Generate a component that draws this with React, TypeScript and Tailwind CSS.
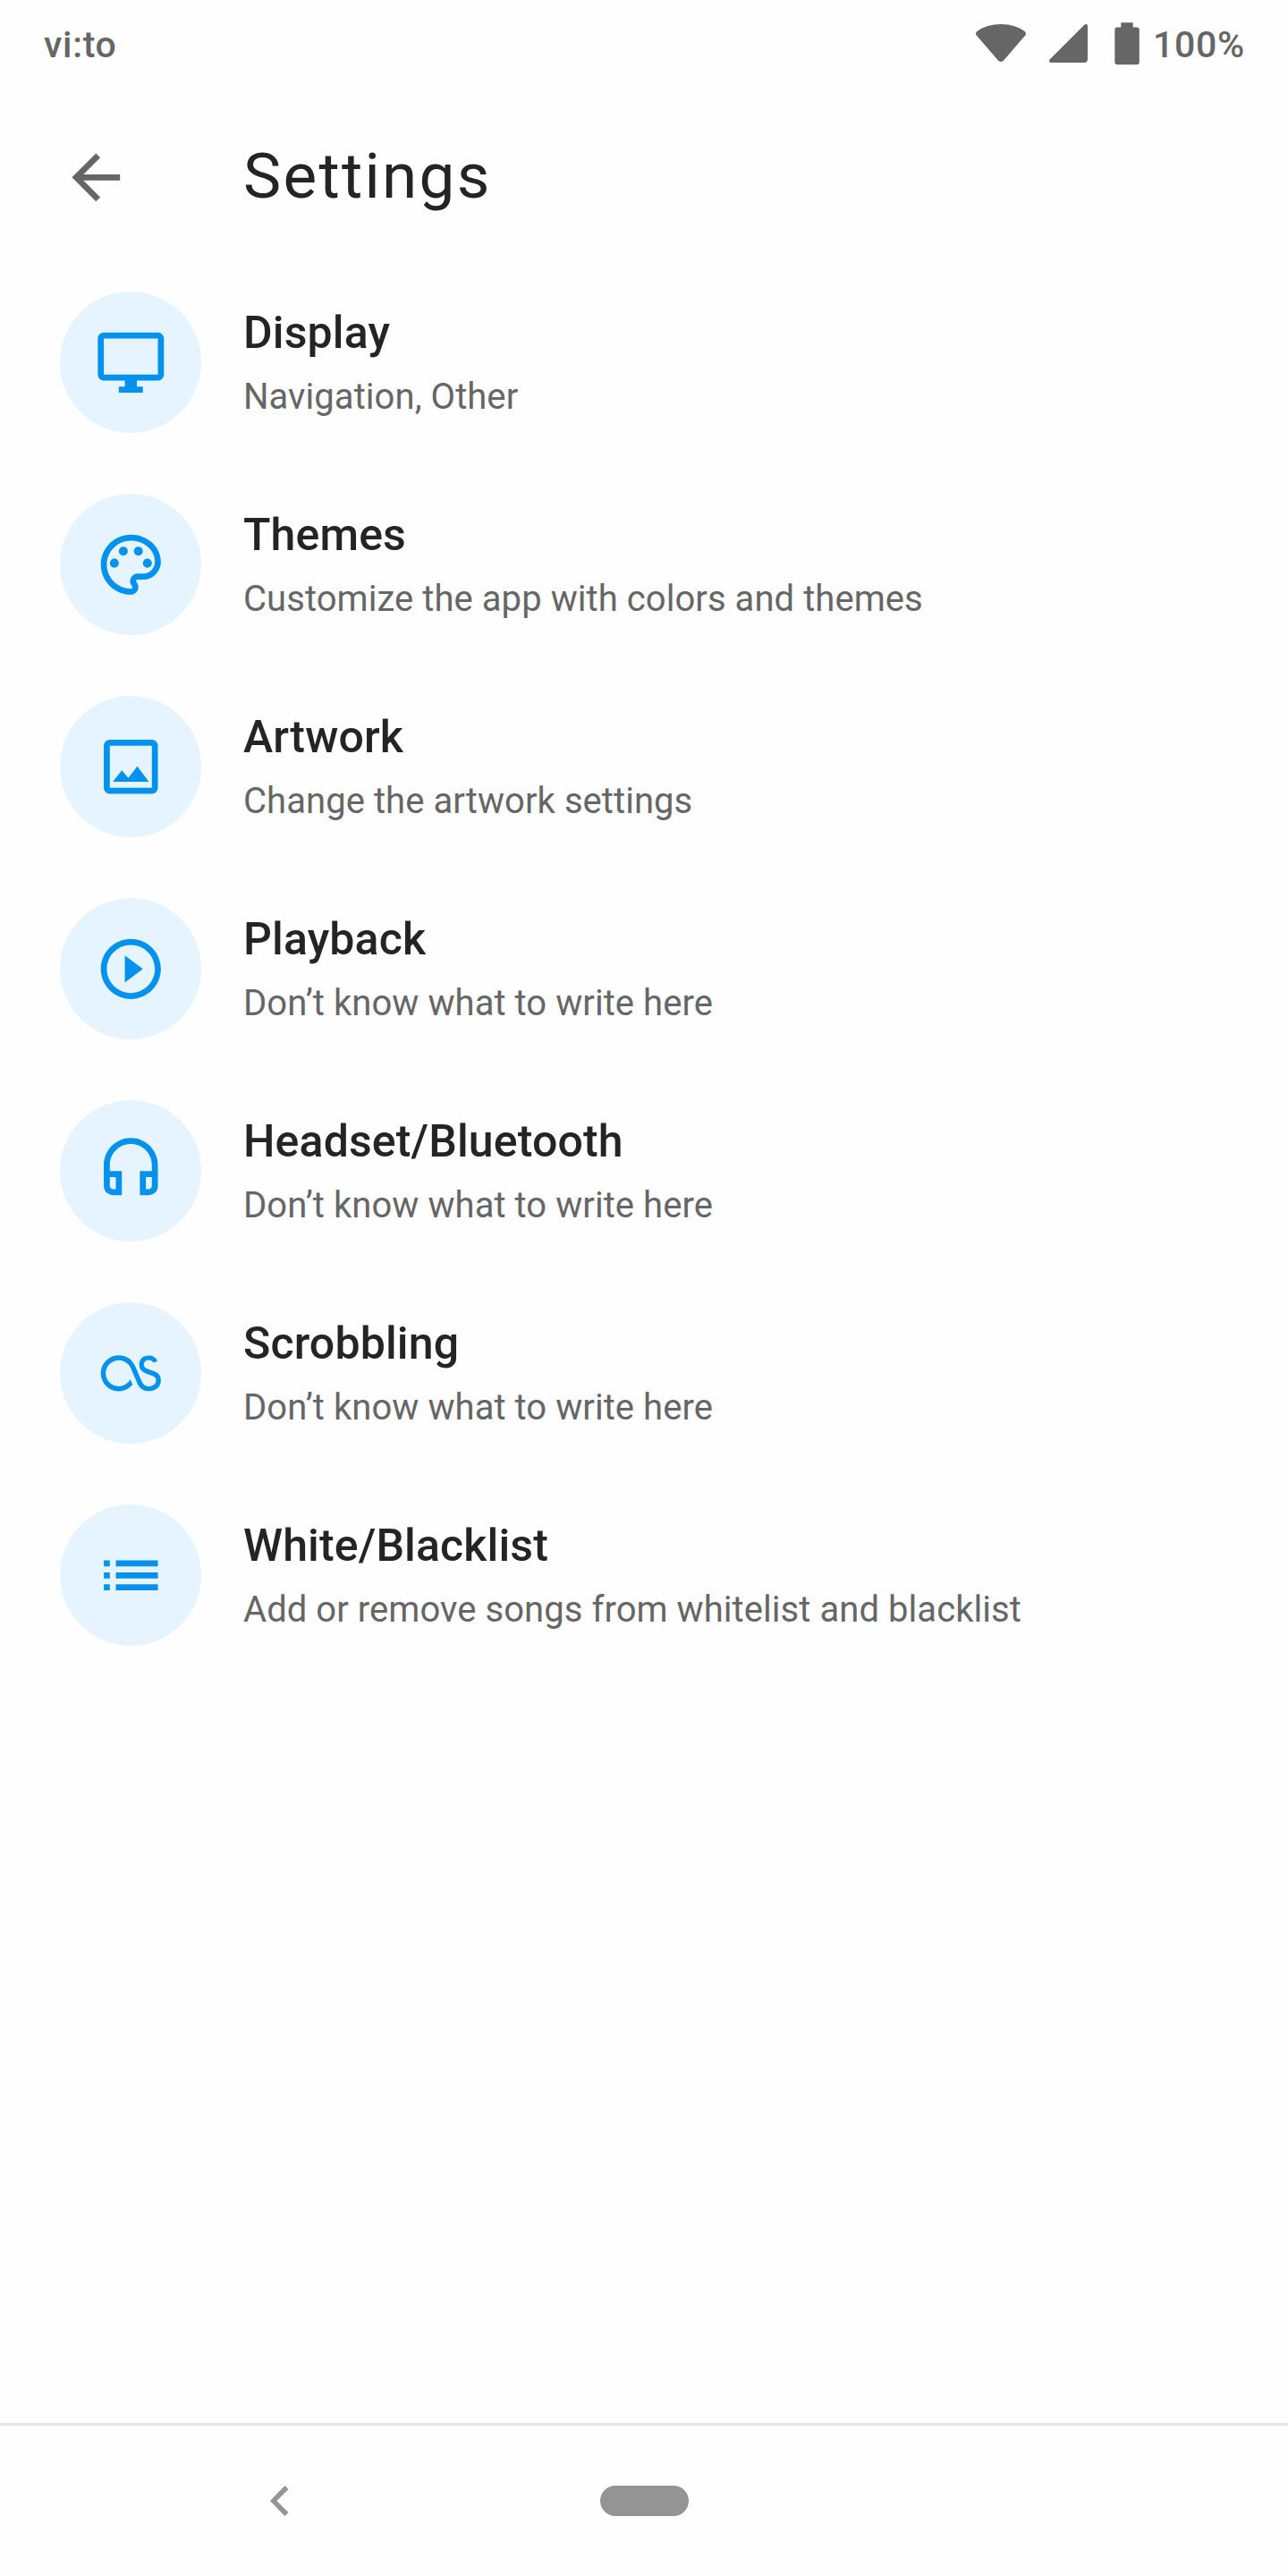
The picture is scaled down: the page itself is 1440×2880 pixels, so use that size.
import React from "react";

const iconPaths = {
  display:
    "M21 2H3c-1.1 0-2 .9-2 2v12c0 1.1.9 2 2 2h7v2H8v2h8v-2h-2v-2h7c1.1 0 2-.9 2-2V4c0-1.1-.9-2-2-2zm0 14H3V4h18v12z",
  themes:
    "M12 22C6.49 22 2 17.51 2 12S6.49 2 12 2s10 4.04 10 9c0 3.31-2.69 6-6 6h-1.77c-.28 0-.5.22-.5.5 0 .12.05.23.13.33.41.47.64 1.06.64 1.67A2.5 2.5 0 0 1 12 22zm0-18c-4.41 0-8 3.59-8 8s3.59 8 8 8c.28 0 .5-.22.5-.5a.54.54 0 0 0-.14-.35c-.41-.46-.63-1.05-.63-1.65a2.5 2.5 0 0 1 2.5-2.5H16c2.21 0 4-1.79 4-4 0-3.86-3.59-7-8-7z M5 11.5a1.5 1.5 0 1 0 3 0a1.5 1.5 0 1 0-3 0z M8 7.5a1.5 1.5 0 1 0 3 0a1.5 1.5 0 1 0-3 0z M13 7.5a1.5 1.5 0 1 0 3 0a1.5 1.5 0 1 0-3 0z M16 11.5a1.5 1.5 0 1 0 3 0a1.5 1.5 0 1 0-3 0z",
  artwork:
    "M19 5v14H5V5h14m0-2H5c-1.1 0-2 .9-2 2v14c0 1.1.9 2 2 2h14c1.1 0 2-.9 2-2V5c0-1.1-.9-2-2-2zm-4.86 8.86l-3 3.87L9 13.14 6 17h12l-3.86-5.14z",
  playback:
    "M10 16.5l6-4.5-6-4.5v9zM12 2C6.48 2 2 6.48 2 12s4.48 10 10 10 10-4.48 10-10S17.52 2 12 2zm0 18c-4.41 0-8-3.59-8-8s3.59-8 8-8 8 3.59 8 8-3.59 8-8 8z",
  headset:
    "M12 1c-4.97 0-9 4.03-9 9v7c0 1.66 1.34 3 3 3h3v-8H5v-2c0-3.87 3.13-7 7-7s7 3.13 7 7v2h-4v8h3c1.66 0 3-1.34 3-3v-7c0-4.97-4.03-9-9-9zM7 14v4H6c-.55 0-1-.45-1-1v-3h2zm12 3c0 .55-.45 1-1 1h-1v-4h2v3z",
  scrobbling:
    "M18,17.93C15.92,17.92 14.81,16.9 14.04,15.09L13.82,14.6L11.92,10.23C11.29,8.69 9.72,7.64 7.96,7.64C5.57,7.64 3.63,9.59 3.63,12C3.63,14.41 5.57,16.36 7.96,16.36C9.62,16.36 11.08,15.41 11.8,14L12.57,15.81C11.5,17.15 9.82,18 7.96,18C4.67,18 2,15.32 2,12C2,8.69 4.67,6 7.96,6C10.44,6 12.45,7.34 13.47,9.7C13.54,9.89 14.54,12.24 15.42,14.24C15.96,15.5 16.42,16.31 17.91,16.36C19.38,16.41 20.39,15.5 20.39,14.37C20.39,13.26 19.62,13 18.32,12.56C16,11.79 14.79,11 14.79,9.15C14.79,7.33 16,6.12 18,6.12C19.31,6.12 20.24,6.7 20.89,7.86L19.62,8.5C19.14,7.84 18.61,7.57 17.94,7.57C17,7.57 16.33,8.23 16.33,9.1C16.33,10.34 17.43,10.53 18.97,11.03C21.04,11.71 22,12.5 22,14.42C22,16.45 20.27,17.93 18,17.93",
  list: "M3 13h2v-2H3v2zm0 4h2v-2H3v2zm0-8h2V7H3v2zm4 4h14v-2H7v2zm0 4h14v-2H7v2zM7 7v2h14V7H7z",
  back: "M20 11H7.83l5.59-5.59L12 4l-8 8 8 8 1.41-1.41L7.83 13H20v-2z",
};

type IconName = keyof typeof iconPaths;

const rows: { icon: IconName; title: string; subtitle: string }[] = [
  { icon: "display", title: "Display", subtitle: "Navigation, Other" },
  { icon: "themes", title: "Themes", subtitle: "Customize the app with colors and themes" },
  { icon: "artwork", title: "Artwork", subtitle: "Change the artwork settings" },
  { icon: "playback", title: "Playback", subtitle: "Don’t know what to write here" },
  { icon: "headset", title: "Headset/Bluetooth", subtitle: "Don’t know what to write here" },
  { icon: "scrobbling", title: "Scrobbling", subtitle: "Don’t know what to write here" },
  { icon: "list", title: "White/Blacklist", subtitle: "Add or remove songs from whitelist and blacklist" },
];

function Icon({ name }: { name: IconName }) {
  return (
    <svg viewBox="0 0 24 24" className="size-[80.6px] shrink-0" fill="currentColor" aria-hidden="true">
      <path d={iconPaths[name]} />
    </svg>
  );
}

function StatusBar() {
  return (
    <div className="flex h-[100px] items-center justify-between pl-[49px] pr-[48px] text-[41px] leading-[48px] font-medium tracking-[0.7px] text-[#666666]">
      <span>vi:to</span>
      <div className="flex items-center">
        <svg viewBox="0 0 56 42" className="mr-[26px] mb-[4px] h-[42px] w-[56px]" fill="currentColor" aria-hidden="true">
          <path d="M1.2 8.2C8.5 2.7 18 0 28 0s19.5 2.7 26.8 8.2c1.4 1.1 1.6 3 .5 4.4L31.4 40.3c-1.8 2.2-5 2.2-6.8 0L.7 12.6c-1.1-1.4-.9-3.3.5-4.4z" />
        </svg>
        <svg viewBox="0 0 43 43" className="mr-[30px] mb-[3px] h-[43px] w-[43px]" fill="currentColor" aria-hidden="true">
          <path d="M43 2v37a4 4 0 0 1-4 4H2C.2 43-.7 40.9.6 39.6L39.6.6C40.9-.7 43 .2 43 2z" />
        </svg>
        <svg viewBox="0 0 28 48" className="mr-[15.4px] mb-[2px] h-[48px] w-[28px]" fill="currentColor" aria-hidden="true">
          <path d="M7.3.3h13.4v5.3h4.1a3 3 0 0 1 3 3v35.7a3 3 0 0 1-3 3H3.3a3 3 0 0 1-3-3V8.6a3 3 0 0 1 3-3h4z" />
        </svg>
        <span>100%</span>
      </div>
    </div>
  );
}

export default function App() {
  return (
    <div className="flex h-[2880px] w-[1440px] flex-col bg-[#fefefe] font-['Roboto',sans-serif]">
      <StatusBar />
      <header className="flex h-[197px] items-center gap-[124px] pl-[67.4px] text-[#666666]">
        <button type="button" aria-label="Back" className="block">
          <Icon name="back" />
        </button>
        <h1 className="pb-[3px] text-[71px] leading-[84px] tracking-[2.3px] text-[#242424]">Settings</h1>
      </header>

      <main className="flex-1 pt-[29px]">
        <ul className="flex flex-col gap-[68px]">
          {rows.map((row) => (
            <li key={row.title} className="flex h-[158px] items-start pl-[67px]">
              <div className="flex size-[158px] shrink-0 items-center justify-center rounded-full bg-[#e5f4fe] text-[#0492ee]">
                <Icon name={row.icon} />
              </div>
              <div className="ml-[47px] pt-[16px]">
                <h2 className="text-[50px] leading-[60px] font-medium tracking-[0.15px] text-[#242424]">{row.title}</h2>
                <p className="mt-[17.5px] text-[40px] leading-[48px] tracking-[0.06px] text-[#666666]">{row.subtitle}</p>
              </div>
            </li>
          ))}
        </ul>
      </main>

      <nav className="flex h-[171px] items-center border-t-[3px] border-[#e5e5e5] text-[#949494]">
        <svg viewBox="0 0 20.4 34" className="ml-[302px] h-[34px] w-[20.4px]" fill="currentColor" aria-hidden="true">
          <path d="M16.4 0l4 4-13 13 13 13-4 4L0 17z" />
        </svg>
        <div className="ml-[348.6px] h-[34px] w-[99px] rounded-full bg-current" />
      </nav>
    </div>
  );
}
